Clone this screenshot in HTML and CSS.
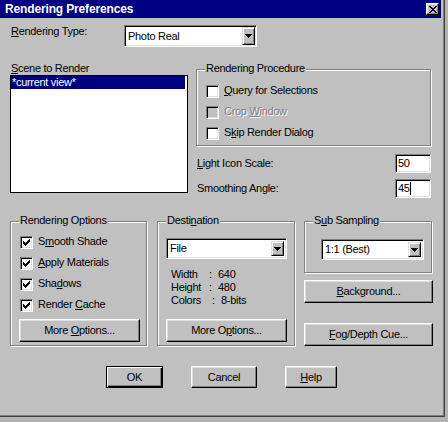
FILE: index.html
```html
<!DOCTYPE html>
<html>
<head>
<meta charset="utf-8">
<link rel="stylesheet" href="styles.css">
</head>
<body>
<div class="window">
  <div class="titlebar">
    <span class="title">Rendering Preferences</span>
    <span class="close"><svg width="8" height="7" viewBox="0 0 8 7" shape-rendering="crispEdges"><path d="M0 0h2v1H0zM6 0h2v1H6zM1 1h2v1H1zM5 1h2v1H5zM2 2h4v1H2zM3 3h2v1H3zM2 4h4v1H2zM1 5h2v1H1zM5 5h2v1H5zM0 6h2v1H0zM6 6h2v1H6z" fill="#000"/></svg></span>
  </div>
  <div class="content">
    <div class="type-row">
      <span class="lbl"><u>R</u>endering Type:</span>
      <div class="combo w-type"><span class="ctext">Photo Real</span><span class="arrow"><svg width="7" height="4" viewBox="0 0 7 4" shape-rendering="crispEdges"><path d="M0 0h7v1H0zM1 1h5v1H1zM2 2h3v1H2zM3 3h1v1H3z" fill="#000"/></svg></span></div>
    </div>

    <div class="mid">
      <div class="scene">
        <div class="scene-lbl"><u>S</u>cene to Render</div>
        <div class="listbox"><div class="item sel">*current view*</div></div>
      </div>
      <div class="right">
        <div class="group proc">
          <span class="glabel">Rendering Procedure</span>
          <div class="checks">
            <div class="check"><span class="box"></span><span class="clbl"><u>Q</u>uery for Selections</span></div>
            <div class="check disabled"><span class="box"></span><span class="clbl">Crop <u>W</u>indow</span></div>
            <div class="check"><span class="box"></span><span class="clbl">S<u>k</u>ip Render Dialog</span></div>
          </div>
        </div>
        <div class="field first"><span class="flbl"><u>L</u>ight Icon Scale:</span><span class="edit">50</span></div>
        <div class="field"><span class="flbl">Smoothing Angle:</span><span class="edit">45<span class="caret"></span></span></div>
      </div>
    </div>

    <div class="lower">
      <div class="group opts">
        <span class="glabel">Rendering Options</span>
        <div class="checks">
          <div class="check"><span class="box"><svg class="tick" width="7" height="7" viewBox="0 0 7 7" shape-rendering="crispEdges"><path d="M6 0h1v1H6zM5 1h2v1H5zM0 2h1v1H0zM4 2h3v1H4zM0 3h2v1H0zM3 3h3v1H3zM0 4h5v1H0zM1 5h3v1H1zM2 6h1v1H2z" fill="#000"/></svg></span><span class="clbl">S<u>m</u>ooth Shade</span></div>
          <div class="check"><span class="box"><svg class="tick" width="7" height="7" viewBox="0 0 7 7" shape-rendering="crispEdges"><path d="M6 0h1v1H6zM5 1h2v1H5zM0 2h1v1H0zM4 2h3v1H4zM0 3h2v1H0zM3 3h3v1H3zM0 4h5v1H0zM1 5h3v1H1zM2 6h1v1H2z" fill="#000"/></svg></span><span class="clbl"><u>A</u>pply Materials</span></div>
          <div class="check"><span class="box"><svg class="tick" width="7" height="7" viewBox="0 0 7 7" shape-rendering="crispEdges"><path d="M6 0h1v1H6zM5 1h2v1H5zM0 2h1v1H0zM4 2h3v1H4zM0 3h2v1H0zM3 3h3v1H3zM0 4h5v1H0zM1 5h3v1H1zM2 6h1v1H2z" fill="#000"/></svg></span><span class="clbl">Sha<u>d</u>ows</span></div>
          <div class="check"><span class="box"><svg class="tick" width="7" height="7" viewBox="0 0 7 7" shape-rendering="crispEdges"><path d="M6 0h1v1H6zM5 1h2v1H5zM0 2h1v1H0zM4 2h3v1H4zM0 3h2v1H0zM3 3h3v1H3zM0 4h5v1H0zM1 5h3v1H1zM2 6h1v1H2z" fill="#000"/></svg></span><span class="clbl">Render <u>C</u>ache</span></div>
        </div>
        <div class="btn wide"><span>More <u>O</u>ptions...</span></div>
      </div>

      <div class="group dest">
        <span class="glabel">Desti<u>n</u>ation</span>
        <div class="combo w-dest"><span class="ctext">File</span><span class="arrow"><svg width="7" height="4" viewBox="0 0 7 4" shape-rendering="crispEdges"><path d="M0 0h7v1H0zM1 1h5v1H1zM2 2h3v1H2zM3 3h1v1H3z" fill="#000"/></svg></span></div>
        <div class="info">
          <div class="irow"><span class="k">Width</span><span class="c">:</span><span class="v">640</span></div>
          <div class="irow"><span class="k">Height</span><span class="c">:</span><span class="v">480</span></div>
          <div class="irow"><span class="k wide">Colors</span><span class="c">:</span><span class="v">8-bits</span></div>
        </div>
        <div class="btn wide"><span>More O<u>p</u>tions...</span></div>
      </div>

      <div class="rcol">
        <div class="group sub">
          <span class="glabel">S<u>u</u>b Sampling</span>
          <div class="combo w-sub"><span class="ctext">1:1 (Best)</span><span class="arrow"><svg width="7" height="4" viewBox="0 0 7 4" shape-rendering="crispEdges"><path d="M0 0h7v1H0zM1 1h5v1H1zM2 2h3v1H2zM3 3h1v1H3z" fill="#000"/></svg></span></div>
        </div>
        <div class="btn side bg"><span><u>B</u>ackground...</span></div>
        <div class="btn side fog"><span><u>F</u>og/Depth Cue...</span></div>
      </div>
    </div>

    <div class="buttons">
      <div class="btn default ok"><span>OK</span></div>
      <div class="btn cancel"><span>Cancel</span></div>
      <div class="btn help"><span><u>H</u>elp</span></div>
    </div>
  </div>
</div>
</body>
</html>
```

FILE: styles.css
```css
* { box-sizing: border-box; }

body {
  margin: 0;
  background: #b4b4b4;
  font-family: "Liberation Sans", Arial, sans-serif;
  font-size: 11px;
  line-height: 13px;
  letter-spacing: -0.3px;
  color: #000;
}

u { text-decoration: underline; text-underline-offset: 1px; }

.window {
  width: 445px;
  height: 417px;
  background: #c0c0c0;
  border-right: 1px solid #404040;
  border-bottom: 1px solid #404040;
  box-shadow: inset -1px -1px 0 #808080;
  padding-right: 3px;
  display: flex;
  flex-direction: column;
}

.titlebar {
  height: 18px;
  background: #000080;
  color: #fff;
  display: flex;
  align-items: center;
  justify-content: space-between;
  padding-left: 5px;
  font-weight: bold;
  font-size: 12px;
  letter-spacing: -0.15px;
}

.close {
  width: 13px;
  height: 12px;
  margin-right: 2px;
  background: #c0c0c0;
  border: 1px solid;
  border-color: #fff #000 #000 #fff;
  box-shadow: inset -1px -1px 0 #808080, inset 1px 1px 0 #dfdfdf;
  display: flex;
  align-items: center;
  justify-content: center;
}
.close svg { display: block; }

.content { padding-left: 10px; }

.type-row {
  display: flex;
  align-items: flex-start;
  margin-top: 7px;
  height: 22px;
}
.type-row .lbl { width: 114px; padding-left: 1px; }

.combo {
  display: flex;
  align-items: stretch;
  background: #fff;
  border: 1px solid;
  border-color: #808080 #fff #fff #808080;
  box-shadow: inset 1px 1px 0 #000, inset -1px -1px 0 #dfdfdf;
  padding: 1px 1px 1px 3px;
}
.ctext { flex: 1; align-self: center; }
.arrow {
  width: 13px;
  background: #c0c0c0;
  border: 1px solid;
  border-color: #dfdfdf #000 #000 #dfdfdf;
  box-shadow: inset 1px 1px 0 #fff, inset -1px -1px 0 #808080;
  display: flex;
  align-items: center;
  justify-content: center;
}
.arrow svg { display: block; }

.w-type { width: 133px; height: 22px; }
.w-dest { width: 121px; height: 21px; padding: 2px 2px 2px 3px; }
.w-sub { width: 103px; height: 21px; margin-left: 8px; padding: 2px 2px 2px 3px; }

.mid { display: flex; margin-top: 15px; }
.scene { width: 178px; }
.scene-lbl { padding-left: 1px; }
.listbox {
  height: 118px;
  background: #fff;
  border: 1px solid #000;
  padding: 0 2px 0 0;
}
.item { padding-left: 1px; height: 13px; }
.item.sel { background: #000080; color: #fff; }

.right { width: 235px; margin-left: 8px; padding-top: 7px; }

.group {
  position: relative;
  border: 1px solid #808080;
  box-shadow: 1px 1px 0 #fff, inset 1px 1px 0 #fff;
}
.glabel {
  position: absolute;
  top: -8px;
  left: 8px;
  padding: 0 1px;
  background: #c0c0c0;
}

.proc { height: 77px; padding: 15px 0 0 9px; }

.checks { display: flex; flex-direction: column; gap: 8px; }
.check { display: flex; align-items: flex-start; height: 13px; }
.box {
  width: 13px;
  height: 13px;
  flex: none;
  background: #fff;
  border: 1px solid;
  border-color: #808080 #fff #fff #808080;
  box-shadow: inset 1px 1px 0 #000, inset -1px -1px 0 #dfdfdf;
  display: flex;
  align-items: center;
  justify-content: center;
}
.tick { display: block; }
.clbl { margin-left: 5px; margin-top: -1px; }
.check.disabled .box { background: #c0c0c0; }
.check.disabled .clbl { color: #808080; text-shadow: 1px 1px 0 #fff; }

.field {
  display: flex;
  justify-content: space-between;
  align-items: center;
  height: 19px;
  margin-top: 6px;
}
.field.first { margin-top: 8px; }
.flbl { padding-left: 1px; }
.edit {
  width: 36px;
  height: 19px;
  background: #fff;
  border: 1px solid;
  border-color: #808080 #fff #fff #808080;
  box-shadow: inset 1px 1px 0 #000, inset -1px -1px 0 #dfdfdf;
  padding-left: 2px;
  display: flex;
  align-items: center;
}
.caret { display: inline-block; width: 1px; height: 13px; background: #000; }

.lower { display: flex; margin-top: 23px; align-items: flex-start; }

.opts { width: 137px; height: 125px; padding: 14px 0 0 8px; }
.opts .checks { padding-left: 1px; }
.opts .btn { margin-top: 7px; }

.dest { width: 138px; height: 125px; margin-left: 10px; padding: 16px 0 0 8px; }
.info { margin-top: 9px; padding-left: 5px; height: 39px; }
.irow { display: flex; }
.k { width: 38px; }
.k.wide { width: 41px; }
.c { width: 3px; }
.v { margin-left: 6px; }
.dest .btn { margin-top: 12px; }

.rcol { width: 128px; margin-left: 9px; display: flex; flex-direction: column; }
.sub { height: 52px; padding-top: 17px; padding-left: 8px; }

.btn {
  display: flex;
  align-items: center;
  justify-content: center;
  background: #c0c0c0;
  border: 1px solid;
  border-color: #fff #000 #000 #fff;
  box-shadow: inset -1px -1px 0 #808080, inset 1px 1px 0 #dfdfdf;
  height: 23px;
}
.btn.wide { width: 121px; }
.btn.side { width: 129px; }
.bg { margin-top: 7px; }
.fog { margin-top: 20px; }

.buttons { display: flex; gap: 28px; margin-top: 20px; padding-left: 96px; }
.buttons .btn { height: 22px; }
.btn.default {
  border: 1px solid #000;
  box-shadow: inset 1px 1px 0 #fff, inset -1px -1px 0 #000, inset -2px -2px 0 #808080;
}
.ok { width: 57px; }
.cancel { width: 66px; }
.help { width: 52px; }
```
